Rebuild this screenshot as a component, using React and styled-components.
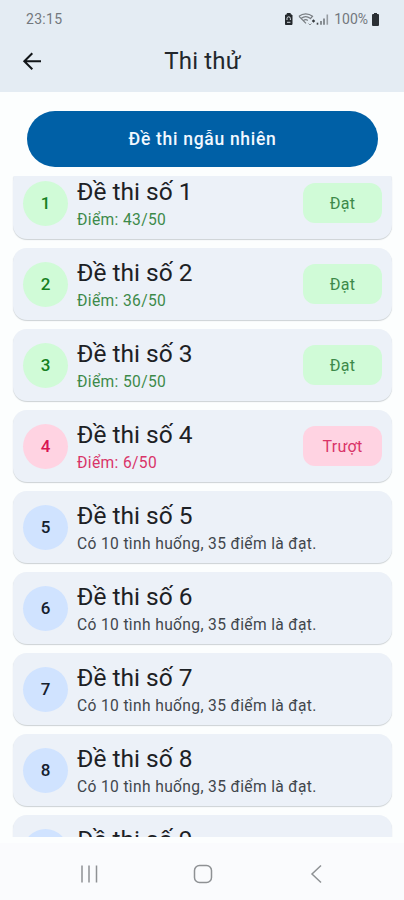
import React from "react";
import styled, { createGlobalStyle } from "styled-components";

const GlobalStyle = createGlobalStyle`
  * {
    box-sizing: border-box;
  }
  body {
    margin: 0;
    background-color: #fcfefe;
    font-family: Roboto, "Noto Sans", sans-serif;
  }
  p, h1, h3 {
    margin: 0;
    font-weight: 400;
  }
`;

const tones = {
  pass: { background: "#d0fbd7", number: "#16801f", text: "#3d8a4a" },
  fail: { background: "#ffd3e2", number: "#d81452", text: "#d93468" },
  idle: { background: "#d0e3ff", number: "#15202e", text: "#41464c" },
};

const Screen = styled.div`
  width: 100%;
  height: 900px;
  display: flex;
  flex-direction: column;
  overflow: hidden;
`;
const Header = styled.header`
  height: 92px;
  flex-shrink: 0;
  background-color: #e4ecf3;
`;
const StatusBar = styled.div`
  height: 38px;
  padding: 0 24px 0 26px;
  display: flex;
  align-items: center;
  justify-content: space-between;
  color: #73787d;
  font-size: 14px;
  letter-spacing: 0.3px;
`;
const StatusIcons = styled.div`
  display: flex;
  align-items: center;
  letter-spacing: 0;
  span {
    margin: 0 3px 0 2px;
  }
  svg {
    display: block;
  }
`;
const TitleBar = styled.div`
  height: 46px;
  padding: 0 20px;
  display: grid;
  grid-template-columns: 24px 1fr 24px;
  align-items: center;
  h1 {
    padding-left: 1px;
    text-align: center;
    color: #22272b;
    font-size: 24px;
    line-height: 28px;
    letter-spacing: 0.15px;
  }
`;
const BackButton = styled.button`
  width: 24px;
  height: 24px;
  padding: 0;
  border: 0;
  background: none;
  svg {
    display: block;
  }
`;
const RandomButton = styled.button`
  height: 56px;
  margin: 19px 26px 9px 27px;
  padding: 0;
  flex-shrink: 0;
  border: 0;
  border-radius: 28px;
  background-color: #0060a6;
  color: #f2f8ff;
  font-family: inherit;
  font-weight: 500;
  font-size: 17.5px;
  letter-spacing: 0.7px;
`;
const ExamList = styled.div`
  height: 661px;
  padding: 0 12px 0 13px;
  flex-shrink: 0;
  overflow: hidden;
`;
const Exams = styled.div`
  margin-top: -9px;
  display: flex;
  flex-direction: column;
  gap: 9px;
`;
const Card = styled.div`
  height: 72px;
  padding: 0 10px;
  display: flex;
  align-items: center;
  flex-shrink: 0;
  border-radius: 14px;
  background-color: #ecf1f8;
  box-shadow: 0 1px 1px rgba(60, 70, 85, 0.24);
`;
const Number = styled.div`
  width: 45px;
  height: 45px;
  display: flex;
  align-items: center;
  justify-content: center;
  flex-shrink: 0;
  border-radius: 50%;
  font-weight: 500;
  font-size: 17px;
  background-color: ${({ $tone }) => tones[$tone].background};
  color: ${({ $tone }) => tones[$tone].number};
`;
const Info = styled.div`
  flex: 1;
  margin-left: 9px;
  padding-top: 3px;
  white-space: nowrap;
  h3 {
    color: #1d2125;
    font-size: 24.5px;
    line-height: 30px;
    letter-spacing: 0;
  }
  p {
    padding-top: 1px;
    color: ${({ $tone }) => tones[$tone].text};
    font-size: 15.6px;
    line-height: 24px;
    letter-spacing: 0.35px;
  }
`;
const Result = styled.div`
  width: 79px;
  height: 40px;
  display: flex;
  align-items: center;
  justify-content: center;
  border-radius: 12px;
  font-size: 16px;
  letter-spacing: 0.3px;
  background-color: ${({ $tone }) => tones[$tone].background};
  color: ${({ $tone }) => tones[$tone].text};
`;
const NavBar = styled.nav`
  flex: 1;
  margin-top: 6px;
  padding: 5px 77px 0 78px;
  display: flex;
  align-items: center;
  justify-content: space-between;
  background-color: #fafbfd;
`;

const NavIcon = ({ children }) => (
  <svg
    width="22"
    height="22"
    viewBox="0 0 22 22"
    fill="none"
    stroke="#8e9194"
    strokeWidth="1.5"
  >
    {children}
  </svg>
);

const exams = [
  { id: 1, tone: "pass", note: "Điểm: 43/50", result: "Đạt" },
  { id: 2, tone: "pass", note: "Điểm: 36/50", result: "Đạt" },
  { id: 3, tone: "pass", note: "Điểm: 50/50", result: "Đạt" },
  { id: 4, tone: "fail", note: "Điểm: 6/50", result: "Trượt" },
  { id: 5, tone: "idle", note: "Có 10 tình huống, 35 điểm là đạt." },
  { id: 6, tone: "idle", note: "Có 10 tình huống, 35 điểm là đạt." },
  { id: 7, tone: "idle", note: "Có 10 tình huống, 35 điểm là đạt." },
  { id: 8, tone: "idle", note: "Có 10 tình huống, 35 điểm là đạt." },
  { id: 9, tone: "idle", note: "Có 10 tình huống, 35 điểm là đạt." },
];

export default function App() {
  return (
    <Screen>
      <GlobalStyle />
      <Header>
        <StatusBar>
          <div>23:15</div>
          <StatusIcons>
            <svg width="49" height="14" viewBox="0 0 49 14" fill="none">
              <path d="M2.5 3h1.6V1.5h3.2V3H9v9.5H2.5z" fill="#24292d" stroke="#24292d" />
              <path d="M4 8V6.5a1.7 1.7 0 0 1 3.4 0V8M4 10.3h3.4" stroke="#d5dce2" />
              <path
                d="M16 4.3c4-3.3 9.500-3.300 13.500 0L27 7M16 4.300l7 7M18.300 6.200c2.700-2 6.200-2 8.800 0M20.500 8.400c1.500-1 3-1 4.300 0"
                stroke="#777c80"
                strokeWidth="1.2"
              />
              <path d="m25.5 11.5 1.5 1.5 1.5-1.5" stroke="#8a9095" />
              <path d="m28.8 9 1.7-1.7L32.2 9l-1.7 1.7z" fill="#34393d" />
              <path d="M34.5 10.7v2" stroke="#42474b" strokeWidth="1.6" />
              <path d="M38 9v3.7M41 6.5v6.2" stroke="#71777b" strokeWidth="1.6" />
              <path d="M44.3 2.5v10.2" stroke="#969ca1" strokeWidth="1.6" />
            </svg>
            <span>100%</span>
            <svg width="9" height="13" viewBox="0 0 9 13">
              <path d="M3 0h3v1h1a1 1 0 0 1 1 1V12a1 1 0 0 1-1 1H2a1 1 0 0 1-1-1V2a1 1 0 0 1 1-1h1z" fill="#2b3034" />
            </svg>
          </StatusIcons>
        </StatusBar>
        <TitleBar>
          <BackButton aria-label="Quay lại">
            <svg width="24" height="24" viewBox="0 0 24 24" fill="none" stroke="#111518" strokeWidth="2">
              <path d="M21 12.3H4.3M12.3 4.3l-8 8 8 8" />
            </svg>
          </BackButton>
          <h1>Thi thử</h1>
        </TitleBar>
      </Header>
      <RandomButton>Đề thi ngẫu nhiên</RandomButton>
      <ExamList>
        <Exams>
          {exams.map((exam) => (
            <Card key={exam.id}>
              <Number $tone={exam.tone}>{exam.id}</Number>
              <Info $tone={exam.tone}>
                <h3>Đề thi số {exam.id}</h3>
                <p>{exam.note}</p>
              </Info>
              {exam.result && <Result $tone={exam.tone}>{exam.result}</Result>}
            </Card>
          ))}
        </Exams>
      </ExamList>
      <NavBar>
        <NavIcon>
          <path d="M4 2.5v17M11 2.5v17M18.5 2.5v17" />
        </NavIcon>
        <NavIcon>
          <rect x="2.5" y="2.5" width="17" height="17" rx="5" />
        </NavIcon>
        <NavIcon>
          <path d="m16 2.5-9 8.5 9 8.5" />
        </NavIcon>
      </NavBar>
    </Screen>
  );
}
